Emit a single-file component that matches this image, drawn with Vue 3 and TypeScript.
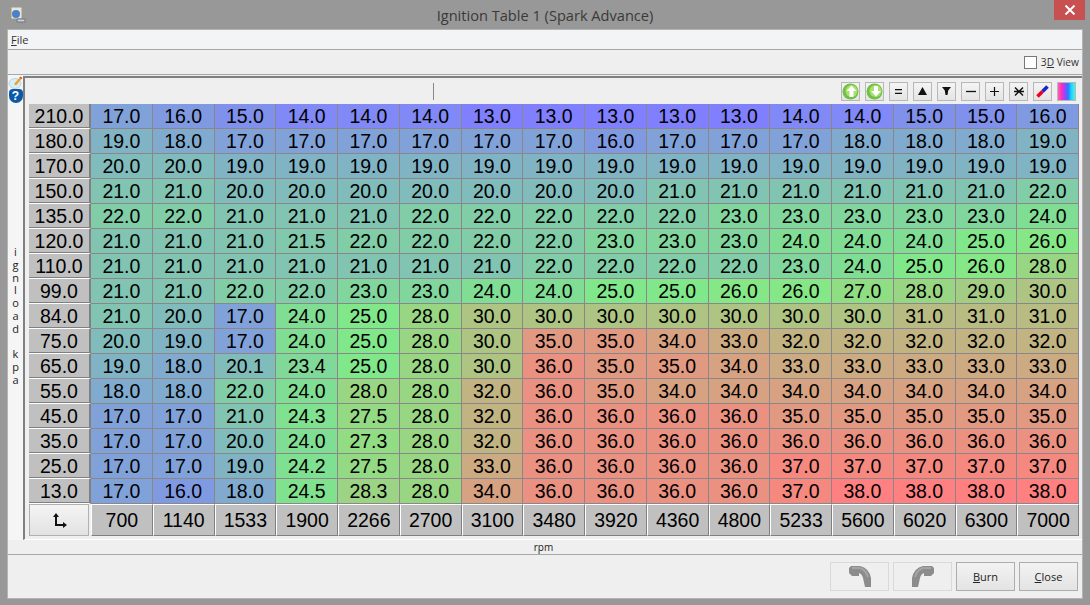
<script setup lang="ts">
const rows: [string, number[]][] = [
  ['210.0', [17, 16, 15, 14, 14, 14, 13, 13, 13, 13, 13, 14, 14, 15, 15, 16]],
  ['180.0', [19, 18, 17, 17, 17, 17, 17, 17, 16, 17, 17, 17, 18, 18, 18, 19]],
  ['170.0', [20, 20, 19, 19, 19, 19, 19, 19, 19, 19, 19, 19, 19, 19, 19, 19]],
  ['150.0', [21, 21, 20, 20, 20, 20, 20, 20, 20, 21, 21, 21, 21, 21, 21, 22]],
  ['135.0', [22, 22, 21, 21, 21, 22, 22, 22, 22, 22, 23, 23, 23, 23, 23, 24]],
  ['120.0', [21, 21, 21, 21.5, 22, 22, 22, 22, 23, 23, 23, 24, 24, 24, 25, 26]],
  ['110.0', [21, 21, 21, 21, 21, 21, 21, 22, 22, 22, 22, 23, 24, 25, 26, 28]],
  ['99.0', [21, 21, 22, 22, 23, 23, 24, 24, 25, 25, 26, 26, 27, 28, 29, 30]],
  ['84.0', [21, 20, 17, 24, 25, 28, 30, 30, 30, 30, 30, 30, 30, 31, 31, 31]],
  ['75.0', [20, 19, 17, 24, 25, 28, 30, 35, 35, 34, 33, 32, 32, 32, 32, 32]],
  ['65.0', [19, 18, 20.1, 23.4, 25, 28, 30, 36, 35, 35, 34, 33, 33, 33, 33, 33]],
  ['55.0', [18, 18, 22, 24, 28, 28, 32, 36, 35, 34, 34, 34, 34, 34, 34, 34]],
  ['45.0', [17, 17, 21, 24.3, 27.5, 28, 32, 36, 36, 36, 36, 35, 35, 35, 35, 35]],
  ['35.0', [17, 17, 20, 24, 27.3, 28, 32, 36, 36, 36, 36, 36, 36, 36, 36, 36]],
  ['25.0', [17, 17, 19, 24.2, 27.5, 28, 33, 36, 36, 36, 36, 37, 37, 37, 37, 37]],
  ['13.0', [17, 16, 18, 24.5, 28.3, 28, 34, 36, 36, 36, 36, 37, 38, 38, 38, 38]],
]
const rpm = [700, 1140, 1533, 1900, 2266, 2700, 3100, 3480, 3920, 4360, 4800, 5233, 5600, 6020, 6300, 7000]
const axisLetters = ['i', 'g', 'n', 'l', 'o', 'a', 'd', '\u00a0', 'k', 'p', 'a']

function cellColor(v: number): string {
  const mid = 25.5
  if (v <= mid) {
    const t = (v - 13) / 12.5
    return `rgb(128,${Math.round(128 + 107 * t)},${Math.round(255 - 122 * t)})`
  }
  const t = (v - mid) / 12.5
  return `rgb(${Math.round(128 + 127 * t)},${Math.round(235 - 107 * t)},${Math.round(133 - 5 * t)})`
}
</script>

<template>
  <div class="window">
    <header class="titlebar">
      <svg class="app-icon" width="18" height="18" viewBox="0 0 18 18">
        <rect x="2" y="1" width="11" height="12" fill="#dfe6f2" stroke="#a89a60" />
        <circle cx="7" cy="8" r="4" fill="#4f7fc4" />
        <path d="M8 13h8v3H8z" fill="#c9ced6" stroke="#6d7480" stroke-width="1" />
      </svg>
      <span class="title">Ignition Table 1 (Spark Advance)</span>
      <div class="close-x">
        <svg width="12" height="10" viewBox="0 0 12 10"><path d="M1.5 0.5l9 9M10.5 0.5l-9 9" stroke="#fff" stroke-width="2" /></svg>
      </div>
    </header>

    <div class="client">
      <nav class="menubar"><span class="menu-item"><u>F</u>ile</span></nav>
      <div class="viewbar">
        <label class="check"><span class="box"></span><span>3<u>D</u> View</span></label>
      </div>

      <div class="main">
        <aside class="side">
          <svg class="note" width="15" height="13" viewBox="0 0 15 13">
            <ellipse cx="7" cy="7.5" rx="6" ry="5" fill="#d9edf5" stroke="#b8d4e0" />
            <path d="M6 8l6-7 2 1.5-6 7z" fill="#e8a23c" />
            <path d="M12 1l2 1.5" stroke="#d84a3a" stroke-width="1.5" />
          </svg>
          <div class="help">?</div>
          <div class="axis-y">
            <span v-for="(l, i) in axisLetters" :key="i">{{ l }}</span>
          </div>
        </aside>

        <section class="panel">
          <div class="tools">
            <span class="divider"></span>
            <button class="tbtn">
              <svg width="17" height="17" viewBox="0 0 17 17">
                <circle cx="8.500" cy="8.500" r="8" fill="#72c046" />
                <circle cx="9.500" cy="8" r="6" fill="#a6e070" />
                <path d="M9.500 2.500l5 5.500h-3v6h-4V8h-3z" fill="#fff" />
              </svg>
            </button>
            <button class="tbtn">
              <svg width="17" height="17" viewBox="0 0 17 17">
                <circle cx="8.500" cy="8.500" r="8" fill="#72c046" />
                <circle cx="9.500" cy="8" r="6" fill="#a6e070" />
                <path d="M10 13.500l5-5.500h-3V3H8v5H5z" fill="#fff" />
              </svg>
            </button>
            <button class="tbtn"><svg width="7" height="5" viewBox="0 0 7 5"><path d="M0 .6h7M0 4.400h7" stroke="#111" stroke-width="1.200" /></svg></button>
            <button class="tbtn"><svg width="9" height="8" viewBox="0 0 9 8"><path d="M4.500 0L9 8H0z" fill="#111" /></svg></button>
            <button class="tbtn"><svg width="9" height="8" viewBox="0 0 9 8"><path d="M0 0h9L6.200 3.500 5.500 8h-2L2.800 3.500z" fill="#111" /></svg></button>
            <button class="tbtn"><svg width="10" height="3" viewBox="0 0 10 3"><path d="M0 1.500h10" stroke="#111" stroke-width="1.300" /></svg></button>
            <button class="tbtn"><svg width="9" height="9" viewBox="0 0 9 9"><path d="M0 4.500h9M4.500 0v9" stroke="#111" stroke-width="1.200" /></svg></button>
            <button class="tbtn"><svg width="10" height="9" viewBox="0 0 10 9"><path d="M1 .5l8 8M9 .5l-8 8M0 4.500h10" stroke="#111" stroke-width="1.400" /></svg></button>
            <button class="tbtn"><svg width="13" height="13" viewBox="0 0 13 13"><path d="M1.500 11.500L6.500 6.500" stroke="#f00020" stroke-width="3.500" /><path d="M6.500 6.500L11.500 1.500" stroke="#2020c8" stroke-width="3.500" /></svg></button>
            <button class="tbtn tbtn-grad"><span class="grad"></span></button>
          </div>

          <div class="table">
            <template v-for="row in rows" :key="row[0]">
              <div class="y-label">{{ row[0] }}</div>
              <div
                v-for="(v, i) in row[1]"
                :key="i"
                class="cell"
                :style="{ backgroundColor: cellColor(v) }"
              >{{ v.toFixed(1) }}</div>
            </template>
            <button class="corner">
              <svg width="17" height="17" viewBox="0 0 17 17">
                <path d="M5 3v10h9" fill="none" stroke="#111" stroke-width="2" />
                <path d="M2 5l3-4 3 4zM12 10l4 3-4 3z" fill="#111" />
              </svg>
            </button>
            <div v-for="r in rpm" :key="r" class="x-label">{{ r }}</div>
          </div>
        </section>
      </div>

      <div class="axis-x">rpm</div>

      <footer class="footer">
        <button class="btn disabled" disabled>
          <svg width="24" height="24" viewBox="0 0 24 24">
            <path d="M1 3L3 1h9q9 2 11 12v9h-6l-2-9q-1-4-4-5v3H4L1 8z" fill="#8c8c8c" />
            <path d="M4 3h8q6 2 8 9" fill="none" stroke="#a4a4a4" stroke-width="2" />
          </svg>
        </button>
        <button class="btn disabled" disabled>
          <svg width="24" height="24" viewBox="0 0 24 24">
            <g transform="translate(24 0) scale(-1 1)">
              <path d="M1 3L3 1h9q9 2 11 12v9h-6l-2-9q-1-4-4-5v3H4L1 8z" fill="#8c8c8c" />
              <path d="M4 3h8q6 2 8 9" fill="none" stroke="#a4a4a4" stroke-width="2" />
            </g>
          </svg>
        </button>
        <button class="btn"><u>B</u>urn</button>
        <button class="btn"><u>C</u>lose</button>
      </footer>
    </div>
  </div>
</template>

<style>
html, body { margin: 0; padding: 0; }
</style>

<style scoped>
.window {
  width: 1090px;
  height: 605px;
  box-sizing: border-box;
  padding: 0 7px 6px;
  display: flex;
  flex-direction: column;
  background: #989898;
  font-family: "Open Sans", "Liberation Sans", sans-serif;
  overflow: hidden;
}
.titlebar {
  height: 29px;
  flex: none;
  display: flex;
  align-items: center;
  justify-content: center;
  position: relative;
}
.app-icon { position: absolute; left: 2px; top: 6px; }
.title { font-size: 14.600px; color: #3a3a3a; }
.close-x {
  position: absolute;
  right: -2px;
  top: 0;
  width: 31px;
  height: 20px;
  background: #c75050;
  display: flex;
  align-items: center;
  justify-content: center;
}
.client {
  flex: 1;
  min-height: 0;
  display: flex;
  flex-direction: column;
  background: #efefef;
  border: 1px solid #b4b4b4;
  box-sizing: border-box;
}
.menubar {
  height: 19px;
  flex: none;
  background: #f3f4f6;
  border-bottom: 1px solid #a6a6a6;
  display: flex;
  align-items: center;
  padding-left: 3px;
}
.menu-item { font-size: 11px; color: #333; }
.viewbar {
  height: 25px;
  flex: none;
  display: flex;
  align-items: center;
  justify-content: flex-end;
  padding-right: 3px;
  border-bottom: 1px solid #a6a6a6;
  box-sizing: border-box;
}
.check { display: flex; align-items: center; gap: 4px; font-size: 10.200px; color: #333; }
.box { width: 11px; height: 11px; flex: none; background: #fff; border: 1px solid #777; }
.main {
  flex: none;
  height: 465px;
  display: flex;
}
.side {
  width: 15px;
  flex: none;
  display: flex;
  flex-direction: column;
  align-items: center;
  background: #f5f5f5;
}
.note { flex: none; margin-top: 1px; }
.help {
  width: 14px;
  height: 14px;
  flex: none;
  border-radius: 4px 4px 7px 7px;
  background: #0a5aa8;
  color: #fff;
  font: bold 12px/14px "Liberation Sans", sans-serif;
  text-align: center;
}
.axis-y {
  margin-top: 143px;
  display: flex;
  flex-direction: column;
  align-items: center;
  font: 11px/12.800px "Open Sans", sans-serif;
  color: #222;
}
.axis-y span { height: 12.800px; }
.panel {
  flex: 1;
  min-width: 0;
  display: flex;
  flex-direction: column;
  border-left: 2px solid #808080;
  border-top: 2px solid #808080;
  padding: 0 3px 0 3px;
  margin-top: 1px;
  background: #efefef;
  height: 464px;
  box-sizing: border-box;
  border-bottom: 1px solid #fff;
}
.tools {
  height: 26px;
  flex: none;
  display: flex;
  align-items: center;
  gap: 5px;
  padding-right: 3px;
  position: relative;
  justify-content: flex-end;
}
.divider {
  position: absolute;
  left: 405px;
  top: 5px;
  width: 1px;
  height: 17px;
  background: #888;
}
.tbtn {
  width: 19px;
  height: 19px;
  padding: 0;
  display: flex;
  align-items: center;
  justify-content: center;
  border: 1px solid #b8b8b8;
  background: linear-gradient(#f4f4f4, #e4e4e4);
  box-sizing: border-box;
}
.grad {
  width: 17px;
  height: 17px;
  background: linear-gradient(90deg, #ff60c0, #ff30b0 20%, #a040ff 40%, #2080ff 60%, #20d8ff 80%, #50f0e0);
}
.table {
  display: grid;
  grid-template-columns: 63px repeat(16, 1fr);
  grid-template-rows: repeat(16, 25px) 33px;
  width: 1051px;
  font: 19.500px "Liberation Sans", sans-serif;
  color: #000;
}
.y-label {
  background: #c0c0c0;
  display: flex;
  align-items: center;
  justify-content: center;
  border-right: 2px solid #808080;
  border-bottom: 1px solid #fff;
  box-shadow: inset 0 -1px 0 #808080;
  margin-left: 1px;
}
.cell {
  display: flex;
  align-items: center;
  justify-content: center;
  border-right: 1px solid #8a868a;
  border-bottom: 1px solid #8a868a;
  box-sizing: border-box;
}
.corner {
  margin: 0 2px 1px 1px;
  padding: 0;
  border: 1px solid #b0b0b0;
  background: linear-gradient(#f4f4f4, #e2e2e2);
  display: flex;
  align-items: center;
  justify-content: center;
}
.x-label {
  background: #c0c0c0;
  display: flex;
  align-items: center;
  justify-content: center;
  border-right: 1px solid #808080;
  border-bottom: 1px solid #808080;
  border-left: 1px solid #fff;
  border-top: 1px solid #fff;
  margin-bottom: 1px;
}
.axis-x {
  height: 14px;
  flex: none;
  text-align: center;
  font: 10px/14px "Open Sans", sans-serif;
  color: #222;
  border-bottom: 1px solid #a6a6a6;
  padding-right: 3px;
}
.footer {
  flex: 1;
  display: flex;
  justify-content: flex-end;
  align-items: flex-start;
  gap: 4px;
  padding: 7px 4px 0 0;
}
.btn {
  width: 59px;
  height: 29px;
  padding: 0;
  border: 1px solid #adadad;
  background: linear-gradient(#f2f2f2, #e4e4e4);
  font: 11px "Open Sans", sans-serif;
  color: #222;
  display: flex;
  align-items: center;
  justify-content: center;
}
.btn.disabled {
  background: #efefef;
  border-color: #d9d9d9;
}
</style>
